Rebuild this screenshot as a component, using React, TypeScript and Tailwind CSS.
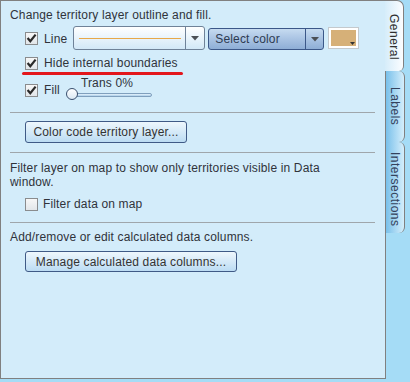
import React from "react";

function Check({ checked }: { checked: boolean }) {
  return (
    <div className="w-[13px] h-[13px] border border-[#8a8c8e] bg-gradient-to-b from-[#f7f7f7] to-[#e2e6ea] flex items-center justify-center shrink-0">
      {checked && (
        <svg width="11" height="11" viewBox="0 0 11 11">
          <path d="M1.6 5 L4.3 8.2 L9.6 1.6" fill="none" stroke="#2a2a2a" strokeWidth="2.2" />
        </svg>
      )}
    </div>
  );
}

function Arrow({ color = "#4b4f55" }: { color?: string }) {
  return (
    <svg width="8" height="5" viewBox="0 0 8 5">
      <path d="M0 0 H8 L4 4.5 Z" fill={color} />
    </svg>
  );
}

function Sep() {
  return <div className="h-[1px] bg-[#9fa6ab] mr-[1px]" />;
}

function Btn({ label, w, h }: { label: string; w: string; h: string }) {
  return (
    <div
      className={`ml-[15px] ${w} ${h} border border-[#3f5a86] rounded-[3px] bg-gradient-to-b from-[#eef7fd] to-[#bcdcf3] flex items-center justify-center text-[#333] leading-[14px] whitespace-nowrap`}
    >
      {label}
    </div>
  );
}

export default function App() {
  return (
    <div className="w-[410px] h-[382px] bg-[#a5dcf6] flex font-['Liberation_Sans',Arial,sans-serif] text-[12px] tracking-[0.15px] text-[#30333a]">
      <div className="w-[386px] h-[379px] border border-[#808080] bg-[#d3ecfa] pl-[9px] pr-[9px] flex flex-col shrink-0">
        <div className="mt-[7px] leading-[14px] whitespace-nowrap">Change territory layer outline and fill.</div>

        {/* Line row */}
        <div className="mt-[4px] h-[24px] flex items-center">
          <div className="ml-[15px]"><Check checked /></div>
          <span className="ml-[6px] leading-[14px] mt-[1px]">Line</span>
          <div className="ml-[6px] w-[132px] h-[24px] border border-[#6f8298] rounded-[3px] bg-gradient-to-b from-[#ffffff] to-[#d2e8f7] flex items-stretch">
            <div className="flex-1 flex items-center pl-[5px] pr-[4px]">
              <div className="h-[1px] w-full bg-[#e8a848]" />
            </div>
            <div className="w-[19px] border-l border-[#6f8298] flex items-center justify-center">
              <Arrow />
            </div>
          </div>
          <div className="ml-[3px] mt-[2px] w-[116px] h-[22px] border border-[#3b5788] rounded-[3px] bg-gradient-to-b from-[#c6dbf0] via-[#a9c3e3] to-[#8eaed6] flex items-stretch">
            <div className="flex-1 flex items-center pl-[6px] text-[#2e3b52] leading-[14px] whitespace-nowrap">Select color</div>
            <div className="w-[18px] border-l border-[#3b5788] flex items-center justify-center">
              <Arrow />
            </div>
          </div>
          <div className="ml-[4px] w-[31px] h-[22px] border border-[#c4c9cd] bg-white p-[2px] relative">
            <div className="w-full h-full bg-[#d6b078]" />
            <div className="absolute right-[3px] bottom-[3px]">
              <svg width="5" height="3" viewBox="0 0 5 3">
                <path d="M0 0 H5 L2.5 3 Z" fill="#333" />
              </svg>
            </div>
          </div>
        </div>

        {/* Hide internal boundaries */}
        <div className="mt-[6px] h-[14px] flex items-center">
          <div className="ml-[15px]"><Check checked /></div>
          <span className="ml-[6px] leading-[14px] whitespace-nowrap">Hide internal boundaries</span>
        </div>
        <div className="mt-[2px] ml-[12px] w-[161px] h-[3px] rounded-full bg-[#e3161c]" />

        {/* Fill row */}
        <div className="mt-[1px] h-[24px] flex items-start">
          <div className="ml-[15px] mt-[8px]"><Check checked /></div>
          <span className="ml-[6px] mt-[7px] leading-[14px]">Fill</span>
          <div className="ml-[6px] flex flex-col">
            <div className="ml-[15px] leading-[14px] whitespace-nowrap">Trans 0%</div>
            <div className="relative h-[12px] w-[86px] -mt-[2px]">
              <div className="absolute left-[5px] top-[5px] w-[81px] h-[4px] rounded-[2px] border border-[#7f9fbd] bg-gradient-to-b from-[#e8f4fc] to-[#a9cde9]" />
              <div className="absolute left-0 top-[0px] w-[12px] h-[12px] rounded-full border border-[#3a4f6e] bg-gradient-to-b from-white to-[#dbe9f4]" />
            </div>
          </div>
        </div>

        <div className="mt-[12px]"><Sep /></div>
        <div className="mt-[8px]"><Btn label="Color code territory layer..." w="w-[162px]" h="h-[22px]" /></div>
        <div className="mt-[9px]"><Sep /></div>

        <div className="mt-[8px] leading-[14px] whitespace-nowrap">
          Filter layer on map to show only territories visible in Data
          <br />
          window.
        </div>

        <div className="mt-[8px] h-[14px] flex items-center">
          <div className="ml-[15px]"><Check checked={false} /></div>
          <span className="ml-[5px] leading-[14px]">Filter data on map</span>
        </div>

        <div className="mt-[11px]"><Sep /></div>
        <div className="mt-[7px] leading-[14px] whitespace-nowrap">Add/remove or edit calculated data columns.</div>
        <div className="mt-[7px]"><Btn label="Manage calculated data columns..." w="w-[212px]" h="h-[21px]" /></div>
      </div>

      {/* Tabs */}
      <div className="-ml-[1px] w-[20px] flex flex-col relative z-10">
        <div className="h-[71px] w-[19px] border-t border-r border-[#808080] rounded-tr-[7px] rounded-br-[5px] bg-gradient-to-r from-[#d6edfa] to-[#fbfdff] flex justify-center pt-[13px]">
          <span className="[writing-mode:vertical-rl] leading-[14px] tracking-[0.5px] text-[#2f2f2f]">General</span>
        </div>
        <div className="h-[71px] border-l border-r border-[#808080] rounded-r-[6px] bg-gradient-to-r from-[#78c0ea] to-[#d4eefb] flex justify-center pt-[16px]">
          <span className="[writing-mode:vertical-rl] leading-[14px] tracking-[0.5px] text-[#34425c]">Labels</span>
        </div>
        <div className="h-[91px] border-l border-r border-[#808080] rounded-r-[6px] bg-gradient-to-r from-[#78c0ea] to-[#d4eefb] flex justify-center pt-[10px]">
          <span className="[writing-mode:vertical-rl] leading-[14px] tracking-[0.5px] text-[#34425c]">Intersections</span>
        </div>
      </div>
    </div>
  );
}
